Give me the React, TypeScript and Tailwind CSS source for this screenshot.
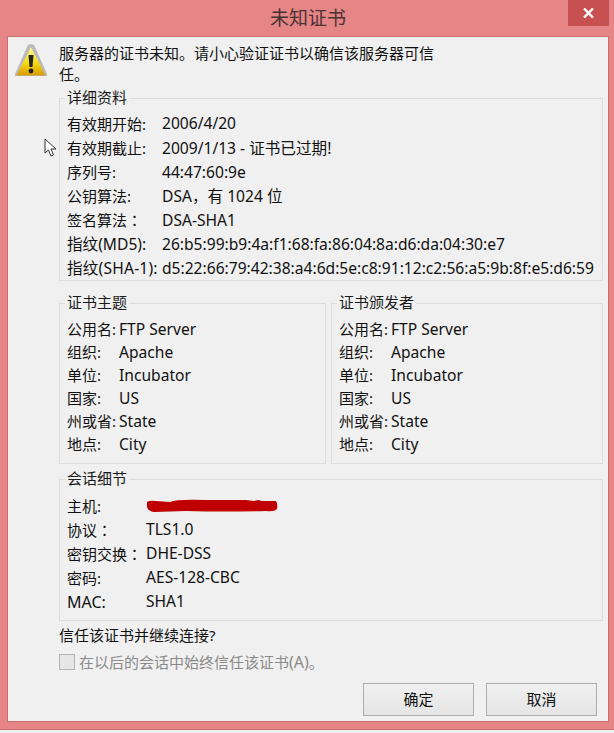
const font = "[font-family:'Noto_Sans','Noto_Sans_CJK_SC',sans-serif]";

function Row({ label, value, labelClass }: { label: string; value: React.ReactNode; labelClass: string }) {
  const full = label.endsWith("：");
  return (
    <div className="flex items-center h-full whitespace-nowrap">
      <span className={labelClass}>
        {full ? label.slice(0, -1) : label}
        {full && <span className="[font-family:'Noto_Sans_CJK_TC',sans-serif]">：</span>}
      </span>
      <span className="text-[15.6px]">{value}</span>
    </div>
  );
}

function Group({ title, className, children }: { title: string; className: string; children: React.ReactNode }) {
  return (
    <fieldset className={`border border-[#dcdcdc] pl-[7px] ${className}`}>
      <legend className="ml-[-2px] px-[2px] h-[20px] leading-[18px] text-[15px] text-[#1a1a1a]">{title}</legend>
      {children}
    </fieldset>
  );
}

function Warning() {
  return (
    <svg width="32" height="33" viewBox="0 0 32 33" className="shrink-0">
      <defs>
        <linearGradient id="w" x1="0" y1="0" x2="0" y2="1">
          <stop offset="0" stopColor="#fff7a0" />
          <stop offset="0.55" stopColor="#f7dc10" />
          <stop offset="1" stopColor="#d99a08" />
        </linearGradient>
      </defs>
      <path d="M16 0 L19 1 L32 30 L32 32 L0 32 L0 30 L13 1 Z" fill="#b9b9b9" />
      <path d="M16 3 L30.5 31.5 L1.5 31.5 Z" fill="url(#w)" />
      <path d="M13.5 11 L18.5 11 L17.5 23 L14.5 23 Z" fill="#222" />
      <circle cx="16" cy="27" r="2.4" fill="#222" />
    </svg>
  );
}

export default function App() {
  const detail: [string, string, string][] = [
    ["有效期开始:", "2006/4/20", ""],
    ["有效期截止:", "2009/1/13 - 证书已过期!", ""],
    ["序列号:", "44:47:60:9e", ""],
    ["公钥算法:", "DSA，有 1024 位", ""],
    ["签名算法：", "DSA-SHA1", ""],
    ["指纹(MD5):", "26:b5:99:b9:4a:f1:68:fa:86:04:8a:d6:da:04:30:e7", "text-[15.6px]"],
    ["指纹(SHA-1):", "d5:22:66:79:42:38:a4:6d:5e:c8:91:12:c2:56:a5:9b:8f:e5:d6:59", "text-[15.6px] tracking-[0.2px]"],
  ];
  const people: [string, string][] = [
    ["公用名:", "FTP Server"],
    ["组织:", "Apache"],
    ["单位:", "Incubator"],
    ["国家:", "US"],
    ["州或省:", "State"],
    ["地点:", "City"],
  ];
  const session: [string, React.ReactNode][] = [
    [
      "主机:",
      <svg width="132" height="14" viewBox="0 0 132 14" className="block">
        <path d="M1 3 Q4 1 10 2 L24 3 Q30 0 60 1 L100 1 L108 2 L112 1 L116 2 L120 2 L130 2 Q132 5 131 10 Q128 13 120 12 Q80 13 40 12 L8 13 Q2 12 1 8 Z" fill="#c00000" />
      </svg>,
    ],
    ["协议：", "TLS1.0"],
    ["密钥交换：", "DHE-DSS"],
    ["密码:", "AES-128-CBC"],
    ["MAC:", "SHA1"],
  ];

  return (
    <div className={`relative w-[614px] h-[733px] overflow-hidden bg-[#f0f0f0] ${font} text-[15px] text-[#111]`}>
      <div className="h-[730px] bg-[#e58586] border-b border-[#c96f70] pl-[7px] pr-[5px] flex flex-col">
        <div className="relative h-[36px] shrink-0 flex items-center justify-center text-[19px] text-[#4a3232] pt-[1px]">
          未知证书
          <div className="absolute right-0 top-0 w-[41px] h-[26px] bg-[#c75050] flex items-center justify-center">
            <svg width="11" height="10" viewBox="0 0 11 10">
              <path d="M1 0.5 L10 9.5 M10 0.5 L1 9.5" stroke="#fff" strokeWidth="2.4" />
            </svg>
          </div>
        </div>
        <div className="h-[686px] border border-[#c96f70] bg-[#f0f0f0] flex flex-col pl-[7px] pr-[5px]">
          <div className="flex items-start pt-[7px] h-[51px] shrink-0">
            <Warning />
            <div className="ml-[12px] w-[380px] leading-[21px] mt-[-1px]">
              服务器的证书未知。请小心验证证书以确信该服务器可信任。
            </div>
          </div>

          <div className="pl-[44px] flex flex-col">
            <Group title="详细资料" className="h-[193px]">
              <div className="grid grid-rows-7 h-[169px] mt-[4px]">
                {detail.map(([l, v, c]) => (
                  <Row key={l} label={l} value={v} labelClass={`w-[95px] ${c}`} />
                ))}
              </div>
            </Group>

            <div className="grid grid-cols-[267px_272px] gap-x-[5px] mt-[12px]">
              {["证书主题", "证书颁发者"].map((t) => (
                <Group key={t} title={t} className="h-[171px]">
                  <div className="grid grid-rows-6 h-[138px] mt-[5px]">
                    {people.map(([l, v]) => (
                      <Row key={l} label={l} value={v} labelClass="w-[52px]" />
                    ))}
                  </div>
                </Group>
              ))}
            </div>

            <Group title="会话细节" className="h-[152px] mt-[5px]">
              <div className="grid grid-rows-5 h-[120px] mt-[5px]">
                {session.map(([l, v], i) => (
                  <Row key={i} label={l} value={v} labelClass={l === "MAC:" ? "w-[79px] text-[16px]" : "w-[79px]"} />
                ))}
              </div>
            </Group>

            <div className="mt-[4px] h-[20px] leading-[20px] text-[#111]">信任该证书并继续连接?</div>
            <div className="mt-[7px] flex items-center h-[20px] text-[#8a8a8a]">
              <span className="w-[16px] h-[16px] border border-[#b4b4b4] bg-[#e6e6e6] mr-[4px]" />
              在以后的会话中始终信任该证书<span className="text-[16px] leading-[20px]">(A)</span>。
            </div>
          </div>

          <div className="flex justify-end gap-[12px] mt-[11px] pr-[6px]">
            <button className="w-[111px] h-[33px] border border-[#adadad] bg-gradient-to-b from-[#f0f0f0] to-[#e5e5e5] text-[#111]">确定</button>
            <button className="w-[111px] h-[33px] border border-[#adadad] bg-gradient-to-b from-[#f0f0f0] to-[#e5e5e5] text-[#111]">取消</button>
          </div>
        </div>
      </div>

      <svg width="14" height="20" viewBox="0 0 14 20" className="absolute left-[44px] top-[138px]">
        <path d="M1 1 L1 15 L4.5 12 L7 18 L9.5 17 L7 11 L12 11 Z" fill="#fff" stroke="#333" strokeWidth="1" />
      </svg>
    </div>
  );
}
